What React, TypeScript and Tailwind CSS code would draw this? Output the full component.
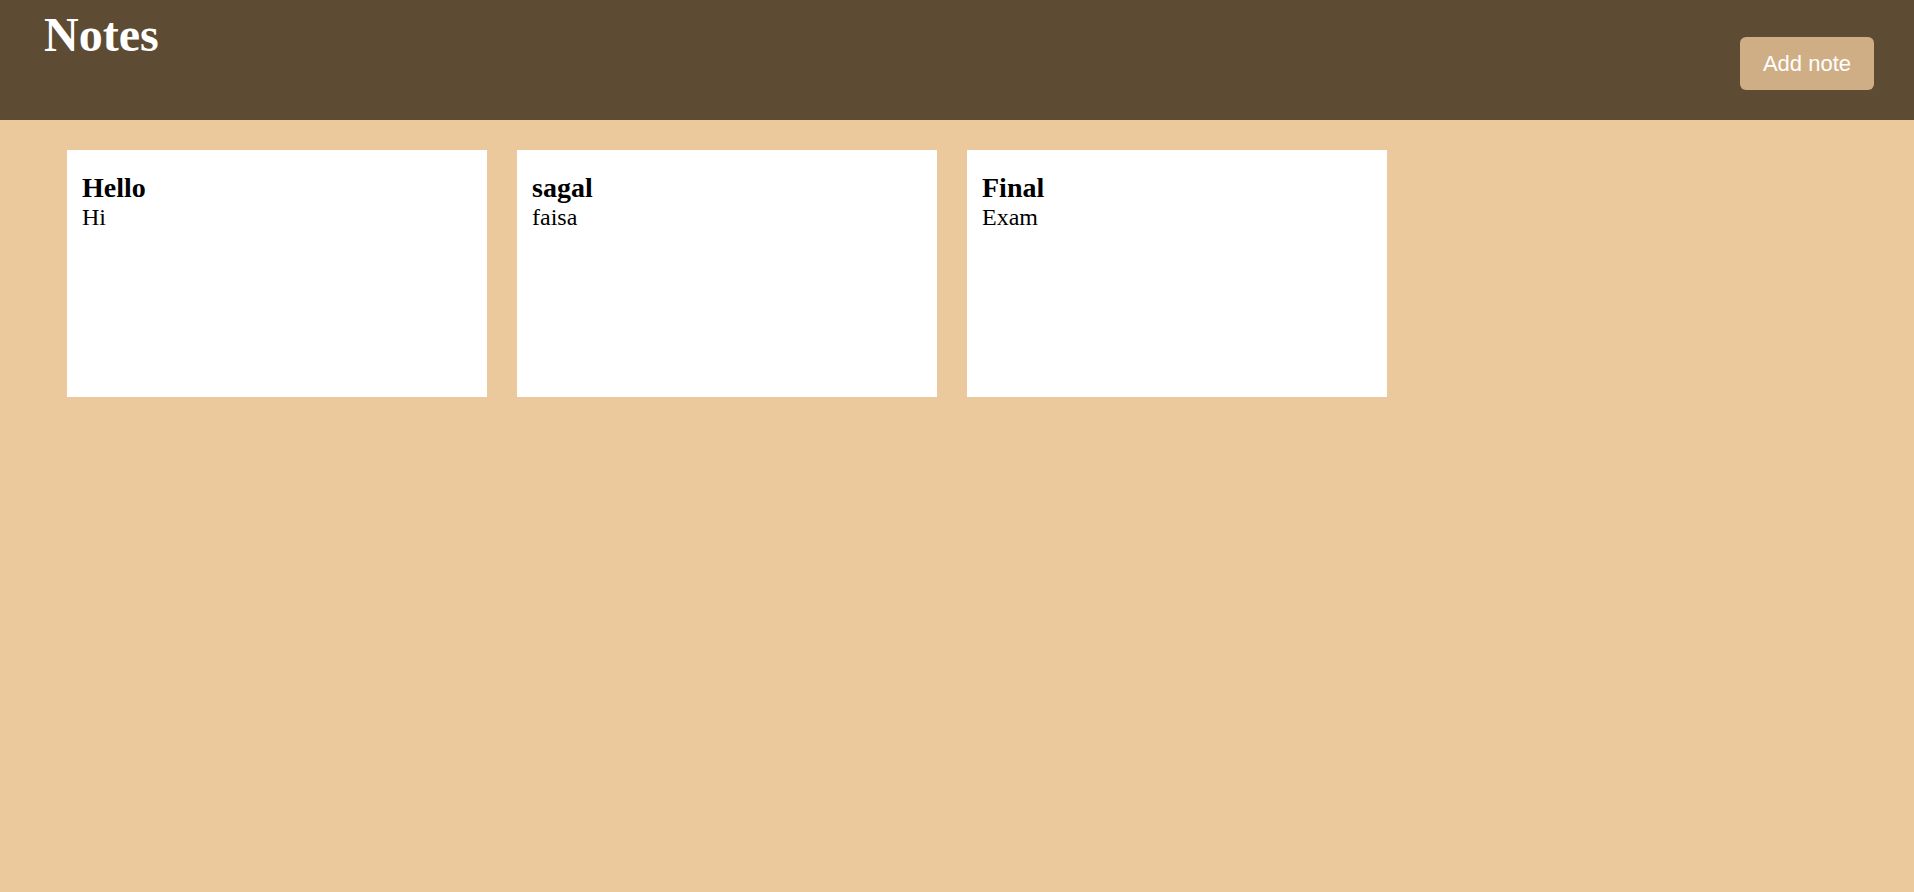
import React from 'react';

const notes = [
  { title: 'Hello', body: 'Hi' },
  { title: 'sagal', body: 'faisa' },
  { title: 'Final', body: 'Exam' },
];

const App: React.FC = () => {
  return (
    <div className="min-h-screen bg-[#ebc99d] font-['Liberation_Serif',serif]">
      {/* Header */}
      <header className="h-[120px] bg-[#5d4b34] flex justify-between items-start pl-[44px] pr-[40px]">
        <h1 className="mt-[7px] text-[48px] leading-[1.15] font-bold text-white">Notes</h1>
        <button className="mt-[37px] h-[53px] px-[23px] rounded-md bg-[#d0ae85] text-white text-[22px] font-['Liberation_Sans',sans-serif]">
          Add note
        </button>
      </header>

      {/* Notes */}
      <div className="flex gap-[30px] pt-[30px] pl-[67px]">
        {notes.map((note, index) => (
          <div key={index} className="w-[420px] h-[247px] bg-white pt-[22px] px-[15px] text-black">
            <h3 className="text-[28px] leading-[1.15] font-bold">{note.title}</h3>
            <p className="text-[24px] leading-[1.15]">{note.body}</p>
          </div>
        ))}
      </div>
    </div>
  );
};

export default App;
